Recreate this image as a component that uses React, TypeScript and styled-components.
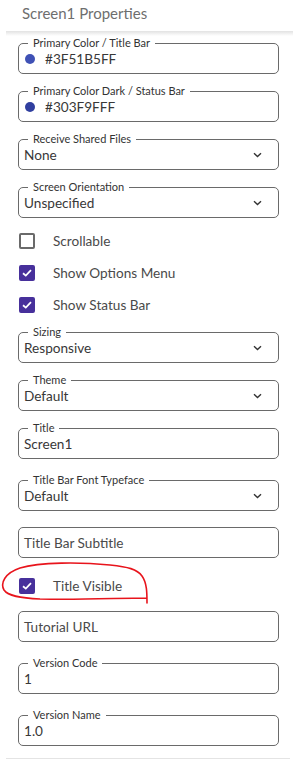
import React from "react";
import styled, { createGlobalStyle } from "styled-components";

const GlobalStyle = createGlobalStyle`
  html, body {
    margin: 0;
    padding: 0;
    background: #ffffff;
  }
  body {
    font-family: Lato, "Open Sans", sans-serif;
  }
`;

const Page = styled.div`
  width: 293px;
  height: 761px;
  overflow: hidden;
  background: #fff;
`;

const Header = styled.div`
  height: 31px;
  padding-left: 22px;
  font-size: 15px;
  line-height: 26px;
  color: #6e6e6e;
`;

const HeaderShadow = styled.div`
  height: 5px;
  margin-left: 6px;
  background: linear-gradient(#e2e2e2, #ffffff);
`;

const Form = styled.div`
  display: flex;
  flex-direction: column;
  padding: 0 14px 0 18px;
`;

const Box = styled.fieldset<{ $gap: number; $plain?: boolean }>`
  margin: ${(p) => p.$gap}px 0 0;
  padding: ${(p) => (p.$plain ? "5px 5px 4px" : "0 5px 4px")};
  border: 1px solid #6a6a6a;
  border-radius: 5px;
  min-width: 0;
`;

const Legend = styled.legend`
  margin-left: 4px;
  padding: 0 5px;
  font-size: 11px;
  line-height: 12px;
  color: #333;
`;

const Value = styled.div<{ $muted?: boolean }>`
  display: flex;
  align-items: center;
  height: 20px;
  font-size: 13.6px;
  color: ${(p) => (p.$muted ? "#4a4a4a" : "#383838")};
`;

const Swatch = styled.span<{ $color: string }>`
  flex: none;
  width: 10px;
  height: 10px;
  border-radius: 50%;
  margin: 0 10px 0 1px;
  background: ${(p) => p.$color};
`;

const Grow = styled.span`
  flex: 1;
`;

const Chevron = styled.svg`
  flex: none;
  width: 9px;
  height: 6px;
  margin-right: 11px;
`;

const CheckGroup = styled.div<{ $gap: number }>`
  display: flex;
  flex-direction: column;
  margin-top: ${(p) => p.$gap}px;
`;

const CheckRow = styled.label`
  position: relative;
  display: flex;
  align-items: center;
  height: 32px;
  padding-left: 1px;
  font-size: 13.6px;
  color: #4a4a4a;
`;

const Tick = styled.span<{ $on: boolean }>`
  display: flex;
  align-items: center;
  justify-content: center;
  width: 16px;
  height: 16px;
  box-sizing: border-box;
  margin-right: 18px;
  border-radius: 2px;
  border: 2px solid ${(p) => (p.$on ? "#47309b" : "#6a6a6a")};
  background: ${(p) => (p.$on ? "#47309b" : "transparent")};
`;

const Scribble = styled.svg`
  position: absolute;
  left: -18px;
  top: -9px;
  width: 160px;
  height: 50px;
  pointer-events: none;
`;

const BottomRule = styled.div`
  height: 1px;
  margin: 12px 3px 0 6px;
  background: #e4e4e4;
`;

const ChevronIcon = () => (
  <Chevron viewBox="0 0 9 6">
    <polyline points="1,1.2 4.5,4.5 8,1.2" fill="none" stroke="#333" strokeWidth="1.4" />
  </Chevron>
);

const Field = ({
  label,
  value,
  gap,
  swatch,
  select,
}: {
  label?: string;
  value: string;
  gap: number;
  swatch?: string;
  select?: boolean;
}) => (
  <Box $gap={gap} $plain={!label}>
    {label && <Legend>{label}</Legend>}
    <Value $muted={!label}>
      {swatch && <Swatch $color={swatch} />}
      <Grow>{value}</Grow>
      {select && <ChevronIcon />}
    </Value>
  </Box>
);

const Check = ({
  label,
  on,
  children,
}: {
  label: string;
  on: boolean;
  children?: React.ReactNode;
}) => (
  <CheckRow>
    <Tick $on={on}>
      {on && (
        <svg width="10" height="8" viewBox="0 0 10 8">
          <polyline points="1,4.2 3.8,6.6 9,1.2" fill="none" stroke="#fff" strokeWidth="1.8" />
        </svg>
      )}
    </Tick>
    {label}
    {children}
  </CheckRow>
);

export default function App() {
  return (
    <Page>
      <GlobalStyle />
      <Header>Screen1 Properties</Header>
      <HeaderShadow />
      <Form>
        <Field gap={1} label="Primary Color / Title Bar" value="#3F51B5FF" swatch="#3f51b5" />
        <Field gap={11} label="Primary Color Dark / Status Bar" value="#303F9FFF" swatch="#303f9f" />
        <Field gap={11} label="Receive Shared Files" value="None" select />
        <Field gap={11} label="Screen Orientation" value="Unspecified" select />
        <CheckGroup $gap={7}>
          <Check label="Scrollable" on={false} />
          <Check label="Show Options Menu" on />
          <Check label="Show Status Bar" on />
        </CheckGroup>
        <Field gap={5} label="Sizing" value="Responsive" select />
        <Field gap={11} label="Theme" value="Default" select />
        <Field gap={11} label="Title" value="Screen1" />
        <Field gap={15} label="Title Bar Font Typeface" value="Default" select />
        <Field gap={16} value="Title Bar Subtitle" />
        <CheckGroup $gap={12}>
          <Check label="Title Visible" on>
            <Scribble viewBox="0 0 160 50">
              <path
                d="M147 42 C147 32 147 22 142 15 C137 8 128 6 110 4 C80 1 40 1 20 7 C5 12 0 22 4 29 C8 35 20 37 40 38 C80 39 120 37 147 37"
                fill="none"
                stroke="#e8141c"
                strokeWidth="1.6"
                strokeLinecap="round"
              />
            </Scribble>
          </Check>
        </CheckGroup>
        <Field gap={9} value="Tutorial URL" />
        <Field gap={15} label="Version Code" value="1" />
        <Field gap={15} label="Version Name" value="1.0" />
      </Form>
      <BottomRule />
    </Page>
  );
}
